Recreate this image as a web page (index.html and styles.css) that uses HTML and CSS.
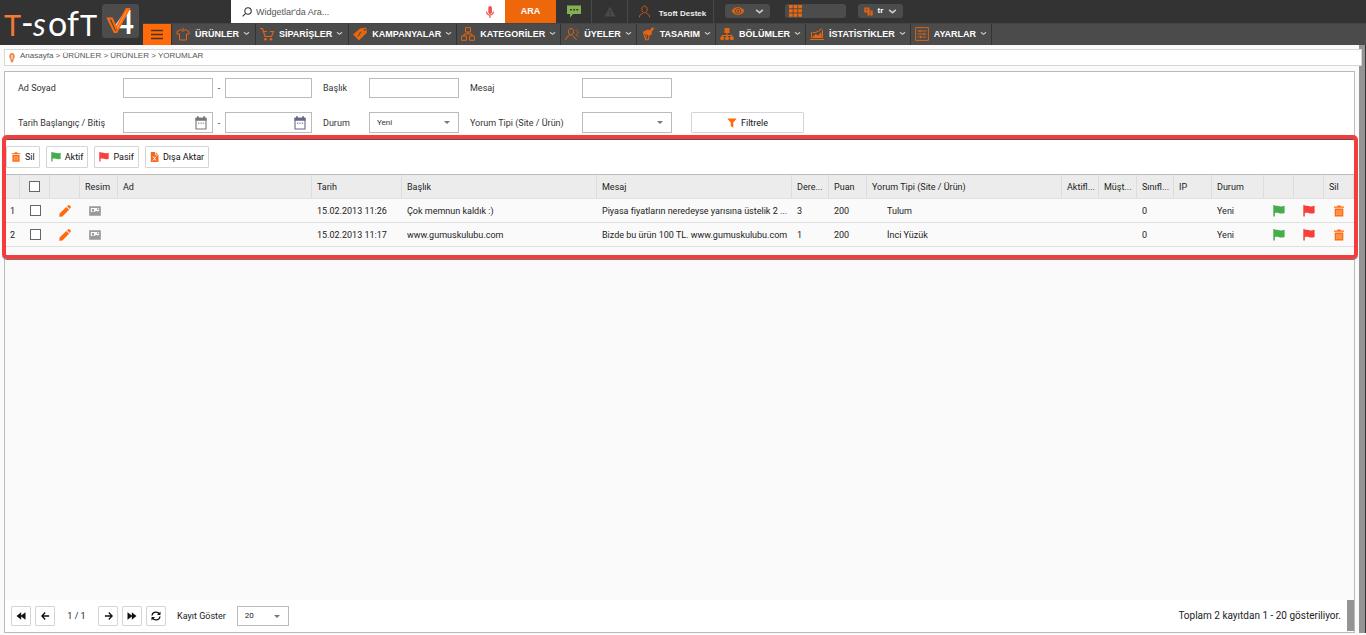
FILE: index.html
```html
<!DOCTYPE html>
<html lang="tr">
<head>
<meta charset="utf-8">
<title>Yorumlar</title>
<link rel="stylesheet" href="styles.css">
</head>
<body>
<svg class="sprite" aria-hidden="true">
  <symbol id="chev" viewBox="0 0 8 6"><path d="M1 1.5 4 4 7 1.5" fill="none" stroke="currentColor" stroke-width="1.4"/></symbol>
  <symbol id="flag" viewBox="0 0 12 12"><path d="M.3 0H1.8V1C4-.2 6 2.6 11.6.8V8C7 9.8 5 6.8 1.8 8.2V11.4H.3z" fill="currentColor"/></symbol>
  <symbol id="trash" viewBox="0 0 12 12"><path d="M1 1.4H4L4.6.4H7.4L8 1.4H11V2.8H1zM1.7 3.6H10.3V11.6H1.7z" fill="currentColor"/><path d="M4 5V10.2M6 5V10.2M8 5V10.2" stroke="#fff" stroke-opacity=".6" stroke-width=".9"/></symbol>
  <symbol id="pencil" viewBox="0 0 12 12"><path d="M.2 11.8.6 8.6 7.3 1.900 10.100 4.700 3.400 11.400zM8 1.300 9.300.2Q10-.1 10.500.3L11.700 1.500Q12.100 2 11.700 2.600L10.700 4z" fill="currentColor"/></symbol>
  <symbol id="image" viewBox="0 0 12 10"><path d="M1 1.200H11V8.800H1z" fill="none" stroke="currentColor" stroke-width="1.700"/><path d="M1.500 8.500V6.500L4 5.200 5.500 6 7 4.800 8.500 5.500 10.500 4.800V8.500z" fill="currentColor"/><path d="M3 3H5V5H3zM8 2.500H9.500V4H8z" fill="currentColor"/></symbol>
  <symbol id="cal" viewBox="0 0 12 14"><path d="M1 2.2H11V13H1z" fill="none" stroke="currentColor" stroke-width="1.1"/><path d="M.5 1.8H2V.3H3.8V1.8H8.2V.3H10V1.8H11.5V4.8H.5z" fill="currentColor"/><path d="M3 7.2H9.5" stroke="currentColor" stroke-dasharray="1.4 1"/></symbol>
  <symbol id="arrow" viewBox="0 0 10 10"><path d="M1 5H9M5.3 1.2 9 5 5.3 8.8" fill="none" stroke="currentColor" stroke-width="1.5"/></symbol>
  <symbol id="fast" viewBox="0 0 10 10"><path d="M.5 1.2 4.8 4.4V1.2L9.5 5 4.8 8.8V5.6L.5 8.8z" fill="currentColor"/></symbol>
  <symbol id="user" viewBox="0 0 14 14"><g fill="none" stroke="currentColor" stroke-width="1"><path d="M7 1.2C3 1.2 3.3 8.4 7 8.4 10.7 8.4 11 1.2 7 1.2z"/><path d="M1.5 13.2C1.5 10.6 3 10 5 9M12.5 13.2C12.5 10.6 11 10 9 9"/></g></symbol>
</svg>

<div class="page">
  <header class="header">
    <a class="logo" href="#" aria-label="T-soft V4">
      <svg width="143" height="45" viewBox="0 0 143 45">
        <g class="wordmark">
          <text class="mark-t" x="4" y="36">T</text>
          <text x="21" y="35">-</text>
          <text class="mark-s" x="33" y="36">s</text>
          <text x="48" y="36">o</text>
          <text x="67" y="36">f</text>
          <text class="mark-end" x="80" y="36">T</text>
        </g>
        <rect x="102" y="4" width="37" height="34" rx="3" fill="#4c4c4c"/>
        <text class="mark-four" x="115" y="34">4</text>
        <path d="M108 18.500H112L116 28 126.500 9H129L116.500 32H114.500z" fill="none" stroke="#ff6a0a" stroke-width="2"/>
      </svg>
    </a>
    <div class="topbar">
      <form class="search">
        <svg width="10" height="10" viewBox="0 0 10 10"><g fill="none" stroke="#333" stroke-width="1.100"><circle cx="6" cy="4" r="3.200"/><path d="M3.700 6.300.6 9.300"/></g></svg>
        <input type="text" placeholder="Widgetlar'da Ara..." aria-label="Widgetlar'da Ara" autofocus>
        <svg width="8" height="12" viewBox="0 0 8 12"><rect x="2.300" y="0" width="3.600" height="8" rx="1.800" fill="#f0504a"/><path d="M.6 5.500C.6 10.200 7.400 10.200 7.400 5.500M4 9V12" fill="none" stroke="#f0504a" stroke-width="1.200"/></svg>
      </form>
      <button class="search-go" type="button">ARA</button>
      <button class="cell" type="button" aria-label="Mesajlar"><svg width="14" height="13" viewBox="0 0 14 13"><path d="M0 .5H14V9H6L3 12.500V9H0z" fill="#83b152"/><path d="M3 4.800H11.500" stroke="#333" stroke-width="1.600" stroke-dasharray="1.800 1.400"/></svg></button>
      <button class="cell" type="button" aria-label="Uyarılar"><svg width="12" height="11" viewBox="0 0 12 11"><path d="M6 .5 11.500 10.500H.5z" fill="#4a4a4a"/><path d="M6 4V7M6 8V9.300" stroke="#333" stroke-width="1.200"/></svg></button>
      <a class="cell account" href="#"><svg width="13" height="13"><use href="#user"/></svg><span>Tsoft Destek</span></a>
      <button class="pill" type="button" aria-label="Görünüm"><svg width="14" height="10" viewBox="0 0 14 10"><path d="M.5 5C3.500-.3 10.500-.3 13.500 5 10.500 10.300 3.500 10.300.5 5z" fill="#d9600f"/><circle cx="7" cy="5" r="2.700" fill="none" stroke="#4c4c4c" stroke-width=".8"/><circle cx="7" cy="5" r="1" fill="#4c4c4c"/></svg><svg class="chev" width="9" height="7"><use href="#chev"/></svg></button>
      <button class="pill wide" type="button" aria-label="Uygulamalar"><svg width="13" height="12" viewBox="0 0 13 12"><path d="M0 1.700H13M0 5.900H13M0 10.100H13" stroke="#ee680b" stroke-width="3.200" stroke-dasharray="3.700 .9"/></svg></button>
      <button class="pill" type="button" aria-label="Dil"><svg width="9" height="9" viewBox="0 0 9 9"><path d="M.3.5H5.500V3.500H8.700V8.500H3.500V5.500H.3z" fill="#e8650f"/><path d="M1.500 2.200H4M2 4 3.800 2.500M5 5H7.500M5 7H7" stroke="#4c4c4c" stroke-width=".7"/></svg><span>tr</span><svg class="chev" width="9" height="7"><use href="#chev"/></svg></button>
    </div>
    <nav class="nav">
      <button class="burger" type="button" aria-label="Menü"><svg width="12" height="11" viewBox="0 0 12 11"><path d="M0 1.500H12M0 5.500H12M0 9.500H12" stroke="#4a3527" stroke-width="1.500"/></svg></button>
      <a href="#"><svg class="ico" viewBox="0 0 14 14"><path d="M5 2.500 1 4.500V7H3.500V13H10.500V7H13V4.500L9 2.500C8.500 4.500 5.500 4.500 5 2.500M7 3V.8" fill="none" stroke="currentColor"/></svg>ÜRÜNLER<svg class="chev" width="7" height="5"><use href="#chev"/></svg></a>
      <a href="#"><svg class="ico" viewBox="0 0 14 14"><path d="M0 1.500H2.500L5 9.500H11.500L13.500 4.500H10M3 4.500H7" fill="none" stroke="currentColor" stroke-width="1.100"/><circle cx="5.500" cy="12.300" r="1.300" fill="currentColor"/><circle cx="11" cy="12.300" r="1.300" fill="currentColor"/></svg>SİPARİŞLER<svg class="chev" width="7" height="5"><use href="#chev"/></svg></a>
      <a href="#"><svg class="ico" viewBox="0 0 14 14"><path d="M0 7.500 7 1.500 13 .5 14 5.500 6 13.500z" fill="currentColor"/><circle cx="11.600" cy="2.800" r="1" fill="#4b4b4b"/><path d="M8 5.500C5 5 8 9 5 8.500M8.300 4.800 4.800 9.500" fill="none" stroke="#4b4b4b" stroke-width=".8"/></svg>KAMPANYALAR<svg class="chev" width="7" height="5"><use href="#chev"/></svg></a>
      <a href="#"><svg class="ico" viewBox="0 0 14 14"><path d="M4.500.7H9.500V5H4.500zM.6 9H5.400V13.300H.6zM8.600 9H13.400V13.300H8.600zM7 5V7M3 9V7H11V9" fill="none" stroke="currentColor"/></svg>KATEGORİLER<svg class="chev" width="7" height="5"><use href="#chev"/></svg></a>
      <a href="#"><svg class="ico" viewBox="0 0 14 14"><path d="M6 1.500C2.500 1.500 2.800 8 6 8 9.200 8 9.500 1.500 6 1.500zM.8 12.800C.8 10 2.500 9.800 4.500 8.500M7.500 8.500 11.500 12.800" fill="none" stroke="currentColor"/><path d="M10.500 3C14 3 13.500 7.500 11 7.500L13.500 10" fill="none" stroke="currentColor" stroke-width=".7"/></svg>ÜYELER<svg class="chev" width="7" height="5"><use href="#chev"/></svg></a>
      <a href="#"><svg class="ico" viewBox="0 0 14 14"><path d="M1.500 5 7 2.500 8.500 3.500 11 .5 13.500 1 10.500 5 11 7 8 9z" fill="currentColor"/><path d="M2 5.500 5.500 8.500 4.500 13 7.500 12.500 8 9M2.500 6 4.500 12.500" fill="none" stroke="currentColor"/></svg>TASARIM<svg class="chev" width="7" height="5"><use href="#chev"/></svg></a>
      <a href="#"><svg class="ico" viewBox="0 0 14 14"><path d="M4.500 1H9.500V6H4.500z" fill="currentColor"/><path d="M7 5V11M2 11V8.500H12V11" fill="none" stroke="currentColor"/><circle cx="2.200" cy="11.300" r="2" fill="currentColor"/><circle cx="7" cy="11.300" r="2" fill="currentColor"/><circle cx="11.800" cy="11.300" r="2" fill="currentColor"/></svg>BÖLÜMLER<svg class="chev" width="7" height="5"><use href="#chev"/></svg></a>
      <a href="#"><svg class="ico" viewBox="0 0 14 14"><path d="M1.500 5V10.500H12.500V3M0 12.500H14" fill="none" stroke="currentColor"/><path d="M2.500 10 5.500 7 8 8.500 11.500 5V10z" fill="currentColor"/><path d="M3 5.500H5L8 4.500 12 1.500" fill="none" stroke="currentColor"/></svg>İSTATİSTİKLER<svg class="chev" width="7" height="5"><use href="#chev"/></svg></a>
      <a href="#"><svg class="ico" viewBox="0 0 14 14"><path d="M.6.6H13.400V13.400H.6zM2.500 4H11.500M2.500 7H11.500M2.500 10H11.500M5 2.700V5.300M9 5.700V8.300M5.500 8.700V11.300" fill="none" stroke="currentColor" stroke-width=".9"/></svg>AYARLAR<svg class="chev" width="7" height="5"><use href="#chev"/></svg></a>
    </nav>
  </header>

  <main class="workspace">
    <div class="page-scroll"></div>
    <nav class="breadcrumb" aria-label="Konum">
      <svg width="6" height="10" viewBox="0 0 6 10"><path d="M3 0C6.500.2 6.300 5 4.500 6.500V8L3 9.900 1.500 8V6.500C-.3 5-.5.2 3 0z" fill="#f08a4b"/><path d="M3 2V6" stroke="#fff"/></svg>
      <span><a href="#">Anasayfa</a> &gt; <a href="#">ÜRÜNLER</a> &gt; <a href="#">ÜRÜNLER</a> &gt; <a href="#">YORUMLAR</a></span>
    </nav>

    <section class="panel">
      <form class="filters">
        <label for="name1">Ad Soyad</label>
        <input id="name1" type="text">
        <span class="dash">-</span>
        <input type="text" aria-label="Soyad">
        <label class="inner" for="title">Başlık</label>
        <input id="title" type="text">
        <label class="inner" for="msg">Mesaj</label>
        <input id="msg" type="text">
        <span></span>

        <label for="from">Tarih Başlangıç / Bitiş</label>
        <span class="field"><input id="from" type="text"><svg class="cal" width="12" height="14"><use href="#cal"/></svg></span>
        <span class="dash">-</span>
        <span class="field"><input type="text" aria-label="Bitiş"><svg class="cal blue" width="12" height="14"><use href="#cal"/></svg></span>
        <label class="inner" for="state">Durum</label>
        <span class="field drop"><select id="state"><option>Yeni</option></select></span>
        <label class="inner" for="kind">Yorum Tipi (Site / Ürün)</label>
        <span class="field drop"><select id="kind"><option></option></select></span>
        <button class="btn filter-btn" type="button"><svg width="10" height="10" viewBox="0 0 10 10"><path d="M.3.500H9.700L6.300 4.500V9.800L3.700 8V4.500z" fill="#ff6a0a"/></svg>Filtrele</button>
      </form>

      <div class="listing">
        <div class="toolbar">
          <button class="btn" type="button"><svg class="orange" width="10" height="10"><use href="#trash"/></svg>Sil</button>
          <button class="btn" type="button"><svg class="green" width="10" height="10"><use href="#flag"/></svg>Aktif</button>
          <button class="btn" type="button"><svg class="red" width="10" height="10"><use href="#flag"/></svg>Pasif</button>
          <button class="btn" type="button"><svg width="9" height="10" viewBox="0 0 9 10"><path d="M.8 0H5.500L8.500 3V10H.8z" fill="#f26a1b"/><path d="M5.500 0V3H8.500" fill="none" stroke="#fff" stroke-width=".7"/><path d="M3 4.500 6 8.500M6 4.500 3 8.500" stroke="#fff"/></svg>Dışa Aktar</button>
        </div>
        <table class="grid">
          <colgroup>
            <col class="w15"><col class="w30"><col class="w30"><col class="w38"><col><col class="w90"><col class="w195"><col class="w195"><col class="w37"><col class="w38"><col class="w195"><col class="w37"><col class="w38"><col class="w37"><col class="w38"><col class="w52"><col class="w30"><col class="w30"><col class="w30">
          </colgroup>
          <thead>
            <tr><th></th><th class="mid"><input type="checkbox" aria-label="Tümünü seç"></th><th></th><th>Resim</th><th>Ad</th><th>Tarih</th><th>Başlık</th><th>Mesaj</th><th>Dere...</th><th>Puan</th><th>Yorum Tipi (Site / Ürün)</th><th>Aktifl...</th><th>Müşt...</th><th>Sınıfl...</th><th>IP</th><th>Durum</th><th></th><th></th><th>Sil</th></tr>
          </thead>
          <tbody>
            <tr><td>1</td><td class="mid"><input type="checkbox" aria-label="Satır 1"></td><td class="mid"><svg class="orange" width="12" height="12"><use href="#pencil"/></svg></td><td class="pic"><svg width="12" height="10"><use href="#image"/></svg></td><td></td><td>15.02.2013 11:26</td><td>Çok memnun kaldık :)</td><td>Piyasa fiyatların neredeyse yarısına üstelik 2 ...</td><td>3</td><td>200</td><td class="kind">Tulum</td><td></td><td></td><td>0</td><td></td><td>Yeni</td><td class="mid"><svg class="green" width="12" height="12"><use href="#flag"/></svg></td><td class="mid"><svg class="red" width="12" height="12"><use href="#flag"/></svg></td><td class="mid"><svg class="orange" width="12" height="12"><use href="#trash"/></svg></td></tr>
            <tr><td>2</td><td class="mid"><input type="checkbox" aria-label="Satır 2"></td><td class="mid"><svg class="orange" width="12" height="12"><use href="#pencil"/></svg></td><td class="pic"><svg width="12" height="10"><use href="#image"/></svg></td><td></td><td>15.02.2013 11:17</td><td>www.gumuskulubu.com</td><td>Bizde bu ürün 100 TL. www.gumuskulubu.com</td><td>1</td><td>200</td><td class="kind">İnci Yüzük</td><td></td><td></td><td>0</td><td></td><td>Yeni</td><td class="mid"><svg class="green" width="12" height="12"><use href="#flag"/></svg></td><td class="mid"><svg class="red" width="12" height="12"><use href="#flag"/></svg></td><td class="mid"><svg class="orange" width="12" height="12"><use href="#trash"/></svg></td></tr>
          </tbody>
        </table>
      </div>

      <footer class="pager">
        <button class="btn flip" type="button" aria-label="İlk"><svg width="10" height="10"><use href="#fast"/></svg></button>
        <button class="btn flip" type="button" aria-label="Önceki"><svg width="9" height="10"><use href="#arrow"/></svg></button>
        <span class="pages">1 / 1</span>
        <button class="btn" type="button" aria-label="Sonraki"><svg width="9" height="10"><use href="#arrow"/></svg></button>
        <button class="btn" type="button" aria-label="Son"><svg width="10" height="10"><use href="#fast"/></svg></button>
        <button class="btn" type="button" aria-label="Yenile"><svg width="10" height="10" viewBox="0 0 10 10"><path d="M1 4.500C1.500.5 6.500 0 8.500 3M9 5.500C8.500 9.500 3.500 10 1.500 7" fill="none" stroke="#111" stroke-width="1.300"/><path d="M9.500.5V4H6zM.5 9.500V6H4z" fill="#111"/></svg></button>
        <label for="size">Kayıt Göster</label>
        <span class="field drop"><select id="size"><option>20</option></select></span>
        <span class="total">Toplam 2 kayıtdan 1 - 20 gösteriliyor.</span>
        <span class="pager-scroll"></span>
      </footer>
    </section>
  </main>
</div>
</body>
</html>
```

FILE: styles.css
```css
* { box-sizing: border-box; }
body { margin: 0; background: #fafafa; color: #222; font: 9px/12px Roboto, sans-serif; }
button, input, select { font: inherit; color: inherit; margin: 0; border-radius: 0; }
button { cursor: pointer; }
a { color: inherit; text-decoration: none; }
svg { display: block; flex: none; }
.sprite { position: absolute; width: 0; height: 0; }
.page { display: flex; flex-direction: column; min-height: 100vh; }

/* Header */
.header { display: grid; grid-template: 23px 22px / 143px 1fr; background: #333; color: #fff; font-family: "Liberation Sans", sans-serif; }
.logo { grid-row: 1 / 3; }
.logo text { fill: #fff; font-family: Lato, sans-serif; }
.wordmark text { font-size: 34px; font-weight: 400; }
.wordmark .mark-t { fill: #f47b35; font-size: 29px; }
.wordmark .mark-end { font-size: 29px; }
.wordmark .mark-s { font-size: 32px; font-style: italic; }
.logo .mark-four { font-size: 33px; font-weight: 700; }
.topbar { display: flex; padding-left: 88px; }
.search { display: flex; align-items: center; width: 274px; padding: 0 11px; background: #fff; }
.search input { flex: 1; min-width: 0; height: 20px; padding: 0 4px; border: 0; outline: 0; background: none; color: #444; font-size: 9px; }
.search input::placeholder { color: #555; opacity: 1; }
.search-go { width: 51px; border: 0; padding: 0 0 2px; background: #ee680b; color: #fff; font-size: 9px; font-weight: 700; }
.cell { display: flex; align-items: center; justify-content: center; width: 36px; padding: 0; border: 0; border-right: 1px solid #484848; background: none; }
.account { width: 86px; gap: 8px; padding-left: 3px; font-size: 8px; font-weight: 700; color: #eee; }
.account svg { color: #d9600f; }
.account span { padding-top: 4px; }
.pill { display: flex; align-items: center; justify-content: space-between; align-self: flex-start; width: 45px; height: 14px; margin: 4px 4px 0 11px; padding: 0 6px; border: 0; border-radius: 3px; background: #4c4c4c; color: #fff; font-size: 8px; font-weight: 700; }
.pill.wide { width: 61px; padding: 0 4px; margin-right: 1px; }
.chev { color: #ccc; }
.nav { display: flex; background: #4b4b4b; border-top: 1px solid #444; }
.nav a { display: flex; align-items: center; padding: 0 5px 2px 4px; border-right: 1px solid #333; font-size: 9px; font-weight: 700; }
.nav a:nth-child(n+4) { padding-right: 4px; }
.nav .ico { width: 14px; height: 14px; margin-right: 5px; color: #e8650f; }
.nav a .chev { margin-left: 4px; }
.burger { width: 29px; padding: 0 8px; border: 0; border-right: 1px solid #333; background: #ff6a0a; }

/* Workspace */
.workspace { position: relative; flex: 1; display: flex; flex-direction: column; padding: 4px 4px 2px; }
.page-scroll { position: absolute; top: 0; right: 0; bottom: 2px; width: 7px; background: #949494; border-right: 1px solid #333; }
.breadcrumb { position: relative; display: flex; align-items: center; gap: 5px; height: 17px; padding: 0 4px; border: 1px solid #d7d7d7; background: #fff; color: #555; font: 8px/12px "Liberation Sans", sans-serif; }
.breadcrumb span { padding-bottom: 4px; }
.panel { flex: 1; display: flex; flex-direction: column; margin: 5px 7px 0 0; border: 1px solid #bbb; }

/* Filters */
.filters { display: grid; grid-template-columns: 105px 90px 12px 87px 57px 90px 123px 90px 132px; grid-template-rows: 20px 21px; row-gap: 14px; align-items: center; height: 67px; padding: 6px 13px; align-content: start; background: #fff; color: #333; }
.filters > *, .field input, .field select { height: 100%; }
.filters label, .dash { display: flex; align-items: center; }
.filters .inner { padding-left: 11px; }
.dash { justify-content: center; }
.filters input, .field select { width: 100%; min-width: 0; border: 1px solid #bbb; background: #fff; outline: 0; padding: 0 7px; }
.field { position: relative; display: block; }
.field select { appearance: none; font-size: 8px; }
.field .cal { position: absolute; right: 6px; top: 4px; color: #777; }
.field .cal.blue { color: #66668f; }
.drop::after { content: ""; position: absolute; right: 9px; top: 9px; border: 3px solid transparent; border-top-color: #777; border-bottom: 0; pointer-events: none; }
.btn { display: flex; align-items: center; justify-content: center; gap: 4px; padding: 0 4px; border: 1px solid #d5d5d5; border-radius: 1px; background: #fff; color: #111; white-space: nowrap; }
.filter-btn { margin-left: 19px; }

/* Listing */
.listing { position: relative; padding-bottom: 8px; }
.listing::after { content: ""; position: absolute; inset: -4px -4px -4px -3px; border: 4px solid #f53b3b; border-radius: 5px; box-shadow: 0 1px 0 #777, inset 0 1px 0 #555; pointer-events: none; z-index: 2; }
.toolbar { display: flex; gap: 6px; height: 35px; padding: 7px 1px 6px; background: #fff; }
.orange { color: #ff6a0a; }
.green { color: #47ac4b; }
.red { color: #f8403a; }
.grid { width: 100%; table-layout: fixed; border-collapse: separate; border-spacing: 0; border-top: 1px solid #bbb; }
.grid th, .grid td { height: 24px; padding: 0 0 0 5px; border-bottom: 1px solid #e0e0e0; text-align: left; font-weight: 400; white-space: nowrap; overflow: hidden; }
.grid th { background: #ececec; border-right: 1px solid #ddd; }
.grid .mid { padding: 0; text-align: center; }
.grid .mid svg, .grid .mid input { margin: 0 auto; }
.grid .pic { padding-left: 9px; color: #999; }
.grid .kind { padding-left: 20px; }
.grid input { display: block; appearance: none; width: 11px; height: 11px; border: 1px solid #666; background: #fff; }
.w15 { width: 15px; } .w30 { width: 30px; } .w37 { width: 37px; } .w38 { width: 38px; } .w52 { width: 52px; } .w90 { width: 90px; } .w195 { width: 195px; }

/* Pager */
.pager { display: flex; align-items: center; gap: 4px; height: 32px; margin-top: auto; padding-left: 6px; background: #fff; }
.pager .btn { width: 20px; height: 20px; padding: 0; }
.flip svg { transform: scaleX(-1); }
.pages { width: 35px; text-align: center; }
.pager label { padding: 0 7px; }
.pager .field { width: 52px; height: 20px; }
.total { margin-left: auto; font-size: 10px; }
.pager-scroll { align-self: stretch; width: 7px; margin: 0 0 1px 2px; background: #949494; }
```
